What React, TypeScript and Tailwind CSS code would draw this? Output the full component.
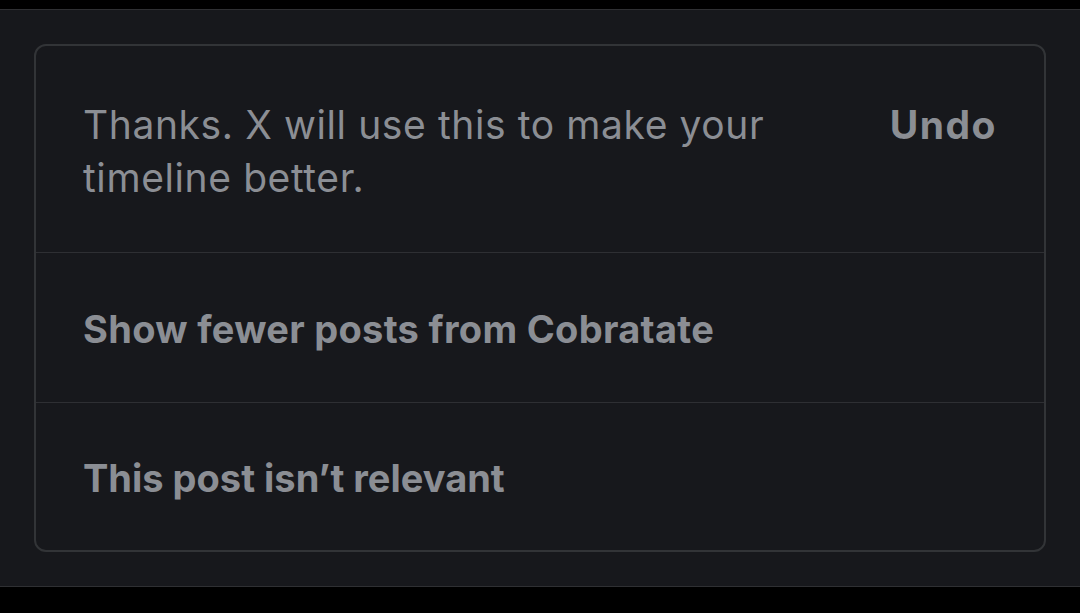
export default function App() {
  return (
    <div className="flex h-[613px] w-[1080px] flex-col bg-black" style={{ fontFamily: "Inter, 'Noto Sans', sans-serif" }}>
      <div className="h-[9px] bg-black" />
      <div className="flex-1 border-y border-[#2f3033] bg-[#17181c] px-[34px] pt-[34px]">
        <div className="rounded-[12px] border-2 border-[#323437] text-[#8b8e94]">
          <div className="flex h-[206px] items-start justify-between px-[47px] pt-[52px]">
            <p className="w-[720px] text-[39px] leading-[53px] tracking-[0.6px]">
              Thanks. X will use this to make your timeline better.
            </p>
            <span className="text-[39px] font-bold leading-[53px] tracking-[1.5px]">Undo</span>
          </div>
          <div className="flex h-[150px] items-center border-t border-[#2e2f33] px-[47px] pt-[4px]">
            <span className="text-[38px] font-bold tracking-[0.3px]">Show fewer posts from Cobratate</span>
          </div>
          <div className="flex h-[148px] items-center border-t border-[#2e2f33] px-[47px] pt-[4px]">
            <span className="text-[38px] font-bold">This post isn’t relevant</span>
          </div>
        </div>
      </div>
      <div className="h-[26px] bg-black" />
    </div>
  )
}
